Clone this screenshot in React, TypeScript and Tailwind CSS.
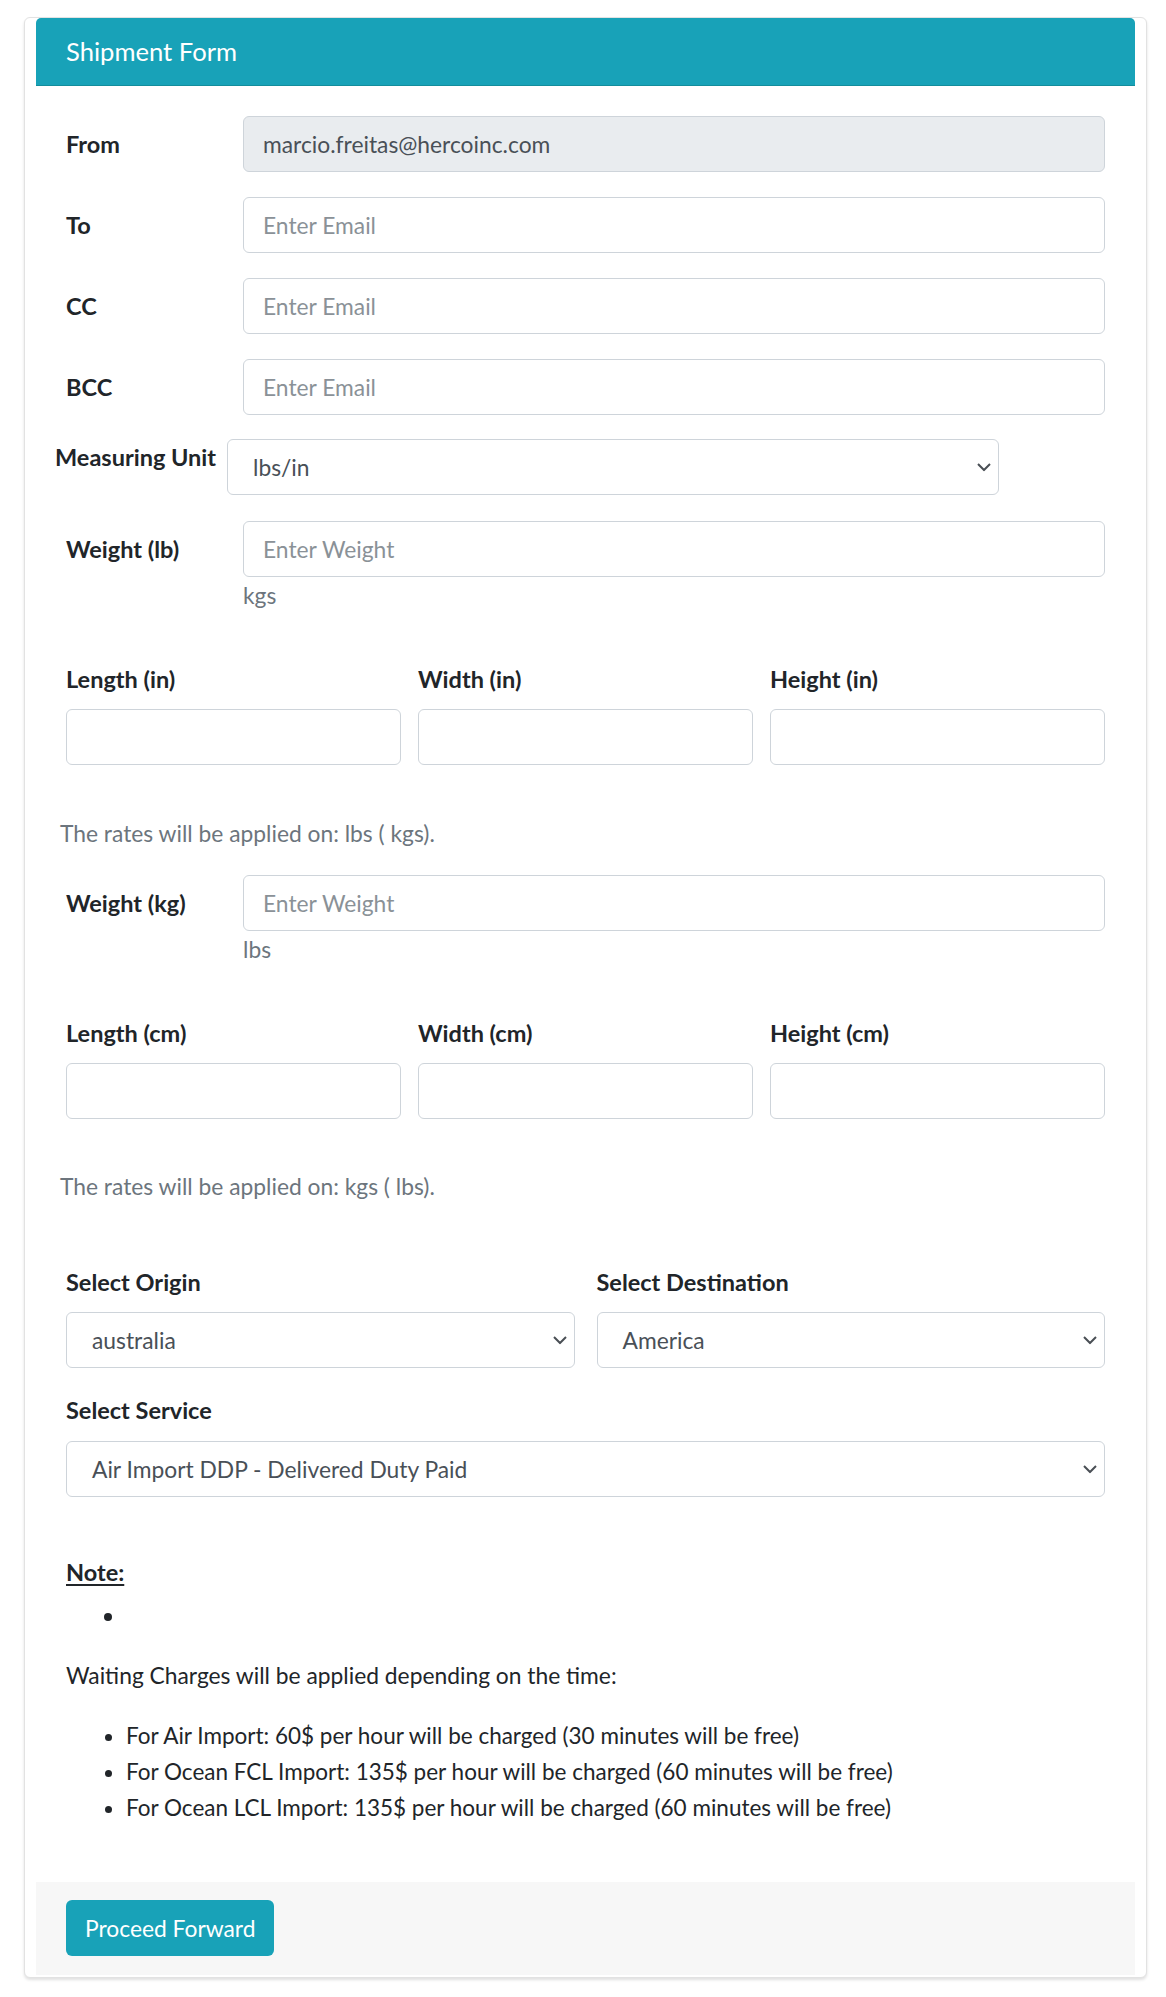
import React from 'react';

const font = { fontFamily: 'Lato, "Open Sans", sans-serif' };

function Chevron() {
  return (
    <svg
      className="absolute right-[7px] top-1/2 -translate-y-1/2 pointer-events-none"
      width="14"
      height="9"
      viewBox="0 0 14 9"
      fill="none"
    >
      <path d="M1 1.5l6 6 6-6" stroke="#4a4f55" strokeWidth="2" />
    </svg>
  );
}

function TextInput({ placeholder, value, disabled }: { placeholder?: string; value?: string; disabled?: boolean }) {
  return (
    <input
      type="text"
      readOnly
      placeholder={placeholder}
      defaultValue={value}
      disabled={disabled}
      className={`w-full h-[56px] rounded-[6px] border border-[#ced4da] px-[19px] text-[22.8px] leading-[36px] text-[#495057] placeholder:text-[#8a9197] outline-none ${
        disabled ? 'bg-[#e9ecef]' : 'bg-white'
      }`}
      style={font}
    />
  );
}

function SelectBox({ value, className = '' }: { value: string; className?: string }) {
  return (
    <div className={`relative h-[56px] rounded-[6px] border border-[#ced4da] bg-white flex items-center pl-[25px] text-[22.8px] text-[#495057] ${className}`}>
      {value}
      <Chevron />
    </div>
  );
}

function FieldRow({ label, placeholder, value, disabled }: { label: string; placeholder?: string; value?: string; disabled?: boolean }) {
  return (
    <div className="flex items-center">
      <label className="w-[177px] shrink-0 font-bold text-[23.5px] leading-[36px] text-[#212529]">{label}</label>
      <div className="flex-1">
        <TextInput placeholder={placeholder} value={value} disabled={disabled} />
      </div>
    </div>
  );
}

function DimRow({ unit }: { unit: string }) {
  return (
    <div className="grid grid-cols-3 gap-x-[17px]">
      {['Length', 'Width', 'Height'].map((name) => (
        <div key={name}>
          <div className="font-bold text-[23.5px] leading-[36px] text-[#212529]">
            {name} ({unit})
          </div>
          <div className="mt-[12px]">
            <TextInput />
          </div>
        </div>
      ))}
    </div>
  );
}

export default function App() {
  const charges = [
    'For Air Import: 60$ per hour will be charged (30 minutes will be free)',
    'For Ocean FCL Import: 135$ per hour will be charged (60 minutes will be free)',
    'For Ocean LCL Import: 135$ per hour will be charged (60 minutes will be free)',
  ];

  return (
    <div className="min-h-screen bg-white pt-[17px] pb-[21px]" style={font}>
      <div className="ml-[24px] w-[1123px] rounded-[6px] border border-[#e2e2e2] bg-white px-[11px] pb-[2px] shadow-[0_2px_3px_rgba(0,0,0,0.12)]">
        {/* Header */}
        <div className="h-[68px] rounded-t-[5px] border-b border-[#138d9c] bg-[#18a2b8] flex items-center px-[30px]">
          <h5 className="text-[25.6px] text-white font-normal">Shipment Form</h5>
        </div>

        {/* Body */}
        <div className="px-[30px] pt-[30px] pb-[56px] text-[22.8px] leading-[36px] text-[#212529]">
          <div className="space-y-[25px]">
            <FieldRow label="From" value="marcio.freitas@hercoinc.com" disabled />
            <FieldRow label="To" placeholder="Enter Email" />
            <FieldRow label="CC" placeholder="Enter Email" />
            <FieldRow label="BCC" placeholder="Enter Email" />
          </div>

          <div className="mt-[24px] flex items-start -ml-[11px]">
            <label className="w-[172px] shrink-0 font-bold text-[23.5px] leading-[36px]">Measuring Unit</label>
            <SelectBox value="lbs/in" className="w-[772px]" />
          </div>

          <div className="mt-[26px]">
            <FieldRow label="Weight (lb)" placeholder="Enter Weight" />
            <div className="pl-[177px] text-[#6c757d] leading-[36px]">kgs</div>
          </div>

          <div className="mt-[48px]">
            <DimRow unit="in" />
          </div>

          <p className="mt-[50px] -ml-[6px] text-[#6c757d]">The rates will be applied on: lbs ( kgs).</p>

          <div className="mt-[24px]">
            <FieldRow label="Weight (kg)" placeholder="Enter Weight" />
            <div className="pl-[177px] text-[#6c757d] leading-[36px]">lbs</div>
          </div>

          <div className="mt-[48px]">
            <DimRow unit="cm" />
          </div>

          <p className="mt-[49px] -ml-[6px] text-[#6c757d]">The rates will be applied on: kgs ( lbs).</p>

          <div className="mt-[60px] grid grid-cols-2 gap-x-[22px]">
            <div>
              <div className="font-bold text-[23.5px]">Select Origin</div>
              <SelectBox value="australia" className="mt-[12px]" />
            </div>
            <div>
              <div className="font-bold text-[23.5px]">Select Destination</div>
              <SelectBox value="America" className="mt-[12px]" />
            </div>
          </div>

          <div className="mt-[24px]">
            <div className="font-bold text-[23.5px]">Select Service</div>
            <SelectBox value="Air Import DDP - Delivered Duty Paid" className="mt-[13px]" />
          </div>

          <p className="mt-[57px] font-bold text-[23.5px] underline underline-offset-[3px]">Note:</p>
          <ul className="mt-[7px] list-disc pl-[60px]">
            <li className="h-[36px]"></li>
          </ul>

          <p className="mt-[24px]">Waiting Charges will be applied depending on the time:</p>
          <ul className="mt-[25px] list-disc pl-[60px] text-[22.5px]">
            {charges.map((c) => (
              <li key={c}>{c}</li>
            ))}
          </ul>
        </div>

        {/* Footer */}
        <div className="bg-[#f7f7f7] px-[30px] pt-[18px] pb-[19px]">
          <button className="h-[56px] rounded-[6px] bg-[#18a2b8] px-[19px] text-[22.8px] text-white">
            Proceed Forward
          </button>
        </div>
      </div>
    </div>
  );
}
